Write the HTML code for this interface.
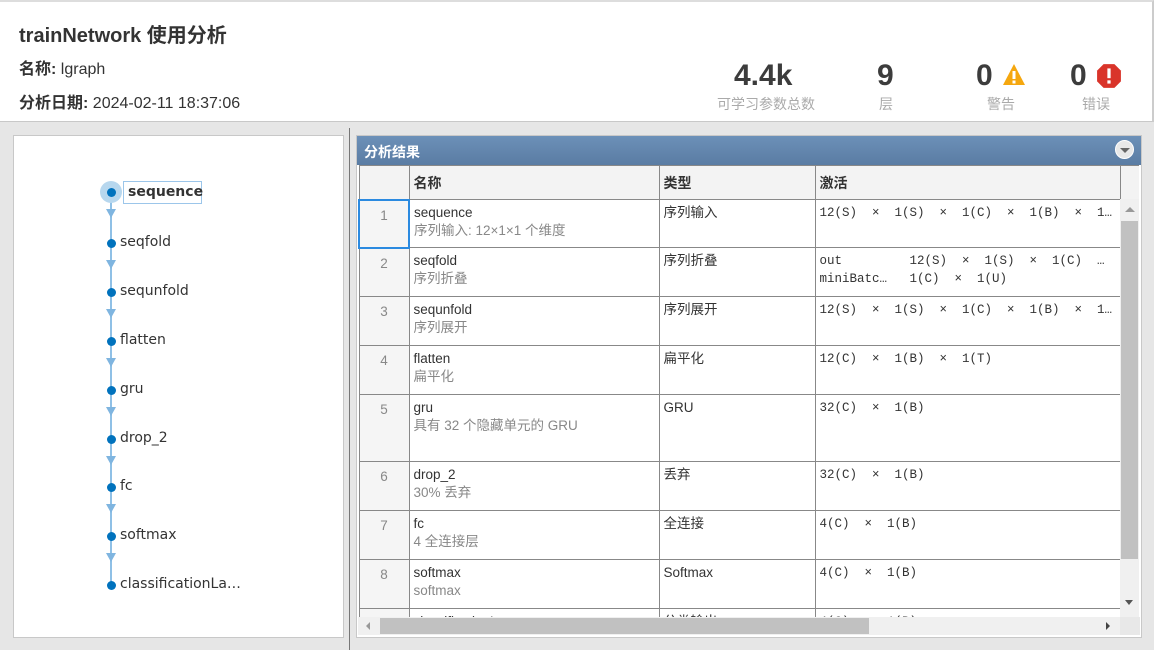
<!DOCTYPE html>
<html><head><meta charset="utf-8"><style>
*{margin:0;padding:0;box-sizing:border-box}
body{width:1154px;height:650px;overflow:hidden;background:#e6e6e6;font-family:"Liberation Sans","Noto Sans CJK SC",sans-serif;color:#333;position:relative}
.a{position:absolute}
#hdr{left:0;top:0;width:1154px;height:122px;background:#fff;border-top:2px solid #ddd;border-bottom:1px solid #c8c8c8;border-right:2px solid #ccc}
.num{font-size:30px;color:#3c3c3c;font-weight:bold;top:58px;line-height:32px}
.sl{font-size:14px;color:#aaa;top:92px;text-align:center;white-space:nowrap}
#left{left:13px;top:135px;width:331px;height:503px;background:#fff;border:1px solid #c8c8c8}
.node{width:9px;height:9px;border-radius:50%;background:#0072bd}
.lbl{color:#333;font-family:"DejaVu Sans","Noto Sans CJK SC",sans-serif;font-size:14px}
#right{left:356px;top:135px;width:786px;height:503px;background:#fff;border:1px solid #c8c8c8}
#tbar{left:357px;top:136px;width:784px;height:29px;background:linear-gradient(#6c90b8,#5a7ca3);color:#fff;font-weight:bold;font-size:14px;padding:6px 0 0 7px}
table{border-collapse:collapse;position:absolute;left:358px;top:165px;table-layout:fixed;width:783px}
td{border:1px solid #888;vertical-align:top;font-size:13.5px;padding:4px 4px;overflow:hidden;white-space:nowrap;line-height:18px}
th{border:1px solid #888;background:#f3f3f3;text-align:left;font-size:14px;padding:0 4px;height:34px}
td.i{text-align:center;color:#888;background:#f5f5f5;padding-top:6px}
.s{color:#888}
.m{font-family:"Liberation Mono","Noto Sans CJK SC",monospace;font-size:12.5px;white-space:pre}
</style></head><body>
<div id="hdr" class="a">
<div class="a" style="left:19px;top:17px;font-size:20px;font-weight:bold;color:#333">trainNetwork 使用分析</div>
<div class="a" style="left:19px;top:53px;font-size:16px"><b>名称:</b> lgraph</div>
<div class="a" style="left:19px;top:87px;font-size:16px"><b>分析日期:</b> 2024-02-11 18:37:06</div>
<div class="a num" style="left:734px">4.4k</div>
<div class="a sl" style="left:706px;width:120px">可学习参数总数</div>
<div class="a num" style="left:877px">9</div>
<div class="a sl" style="left:866px;width:40px">层</div>
<div class="a num" style="left:976px">0</div>
<div class="a sl" style="left:976px;width:50px">警告</div>
<svg class="a" style="left:1002px;top:61px" width="24" height="24" viewBox="0 0 24 24"><path d="M12 1 L23 22 H1 Z" fill="#f5a70f"/><rect x="10.5" y="8" width="3" height="8" fill="#fff"/><rect x="10.5" y="17.5" width="3" height="3" fill="#fff"/></svg>
<div class="a num" style="left:1070px">0</div>
<div class="a sl" style="left:1071px;width:50px">错误</div>
<svg class="a" style="left:1096px;top:61px" width="26" height="26" viewBox="0 0 24 24"><path d="M7 1H17L23 7V17L17 23H7L1 17V7Z" fill="#d9342a"/><rect x="10.5" y="5" width="3" height="9" fill="#fff"/><rect x="10.5" y="16" width="3" height="3" fill="#fff"/></svg>
</div>
<div class="a" style="left:349px;top:128px;width:1px;height:522px;background:#777"></div>
<div id="left" class="a"></div>
<div class="a" style="left:110px;top:192px;width:2px;height:392px;background:#8fc0e6"></div>
<div class="a" style="left:100px;top:181px;width:22px;height:22px;border-radius:50%;background:#b7d7ee"></div>
<div class="a" style="left:123px;top:181px;width:79px;height:23px;border:1px solid #9cc6ea;background:#fff;font-weight:bold;font-size:14px;font-family:'DejaVu Sans',sans-serif;padding:2px 0 0 4px">sequence</div>
<div id="tree"></div>
<div id="right" class="a"></div>
<div id="tbar" class="a">分析结果</div>
<div class="a" style="left:1115px;top:140px;width:19px;height:19px;border-radius:50%;background:#e8e8e8;border:1px solid #fff"><div class="a" style="left:4px;top:7px;border-left:5px solid transparent;border-right:5px solid transparent;border-top:5px solid #666"></div></div>
<div class="a" style="left:358px;top:165px;width:781px;height:452px;overflow:hidden">
<table style="left:0;top:0">
<colgroup><col style="width:50px"><col style="width:250px"><col style="width:156px"><col style="width:305px"><col style="width:22px"></colgroup>
<tr><th></th><th>名称</th><th>类型</th><th>激活</th><th></th></tr>
<tr style="height:48px"><td class="i" style="border:2px solid #2b8ae0">1</td><td>sequence<br><span class="s">序列输入: 12×1×1 个维度</span></td><td>序列输入</td><td class="m">12(S)  ×  1(S)  ×  1(C)  ×  1(B)  ×  1…</td><td style="border:none"></td></tr>
<tr style="height:49px"><td class="i">2</td><td>seqfold<br><span class="s">序列折叠</span></td><td>序列折叠</td><td class="m">out         12(S)  ×  1(S)  ×  1(C)  …
miniBatc…   1(C)  ×  1(U)</td><td style="border:none"></td></tr>
<tr style="height:49px"><td class="i">3</td><td>sequnfold<br><span class="s">序列展开</span></td><td>序列展开</td><td class="m">12(S)  ×  1(S)  ×  1(C)  ×  1(B)  ×  1…</td><td style="border:none"></td></tr>
<tr style="height:49px"><td class="i">4</td><td>flatten<br><span class="s">扁平化</span></td><td>扁平化</td><td class="m">12(C)  ×  1(B)  ×  1(T)</td><td style="border:none"></td></tr>
<tr style="height:67px"><td class="i">5</td><td>gru<br><span class="s">具有 32 个隐藏单元的 GRU</span></td><td>GRU</td><td class="m">32(C)  ×  1(B)</td><td style="border:none"></td></tr>
<tr style="height:49px"><td class="i">6</td><td>drop_2<br><span class="s">30% 丢弃</span></td><td>丢弃</td><td class="m">32(C)  ×  1(B)</td><td style="border:none"></td></tr>
<tr style="height:49px"><td class="i">7</td><td>fc<br><span class="s">4 全连接层</span></td><td>全连接</td><td class="m">4(C)  ×  1(B)</td><td style="border:none"></td></tr>
<tr style="height:49px"><td class="i">8</td><td>softmax<br><span class="s">softmax</span></td><td>Softmax</td><td class="m">4(C)  ×  1(B)</td><td style="border:none"></td></tr>
<tr style="height:49px"><td class="i">9</td><td>classificationLayer</td><td>分类输出</td><td class="m">4(C)  ×  1(B)</td><td style="border:none"></td></tr>
</table>
<div class="a" style="left:762px;top:34px;width:19px;height:418px;background:#f0f0f0"></div>
<div class="a" style="left:763px;top:56px;width:17px;height:338px;background:#c1c1c1"></div>
<div class="a" style="left:767px;top:42px;border-left:5px solid transparent;border-right:5px solid transparent;border-bottom:5px solid #999"></div>
<div class="a" style="left:767px;top:435px;border-left:4px solid transparent;border-right:4px solid transparent;border-top:5px solid #555"></div>
<div class="a" style="left:0;top:452px;width:781px;height:18px;background:#f0f0f0"></div>
</div>
<div class="a" style="left:358px;top:617px;width:762px;height:18px;background:#f0f0f0"></div>
<div class="a" style="left:380px;top:618px;width:489px;height:16px;background:#c1c1c1"></div>
<div class="a" style="left:366px;top:622px;border-top:4px solid transparent;border-bottom:4px solid transparent;border-right:4px solid #999"></div>
<div class="a" style="left:1106px;top:622px;border-top:4px solid transparent;border-bottom:4px solid transparent;border-left:4px solid #444"></div>
<div class="a" style="left:1120px;top:617px;width:20px;height:18px;background:#e8e8e8"></div>
<script>
var n=["sequence","seqfold","sequnfold","flatten","gru","drop_2","fc","softmax","classificationLa…"],y=[192,243,292,341,390,439,487,536,585],h="";
for(var i=0;i<9;i++){h+='<div class="a node" style="left:107px;top:'+(y[i]-4)+'px"></div>';
if(i>0)h+='<div class="a lbl" style="left:120px;top:'+(y[i]-9)+'px">'+n[i]+'</div>';
if(i<8)h+='<div class="a" style="left:106px;top:'+(y[i]+17)+'px;border-left:5px solid transparent;border-right:5px solid transparent;border-top:9px solid #7fb5e0"></div>';}
document.getElementById("tree").innerHTML=h;
</script>
</body></html>
